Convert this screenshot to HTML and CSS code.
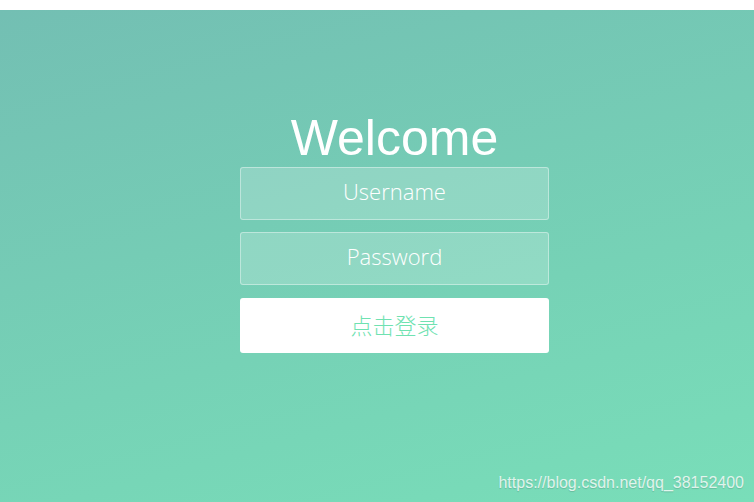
FILE: index.html
```html
<!DOCTYPE html>
<html lang="zh">
<head>
<meta charset="utf-8">
<title>Welcome</title>
<link rel="stylesheet" href="styles.css">
</head>
<body>
<div class="wrapper">
  <div class="container">
    <h1 class="title">Welcome</h1>
    <form class="form">
      <input class="field" type="text" placeholder="Username">
      <input class="field" type="password" placeholder="Password">
      <button class="login" type="button">点击登录</button>
    </form>
  </div>
  <div class="watermark">https://blog.csdn.net/qq_38152400</div>
</div>
</body>
</html>
```
FILE: styles.css
```css
html, body {
  margin: 0;
  padding: 0;
  background: #ffffff;
}
body {
  padding-top: 10px;
  overflow: hidden;
}
.wrapper {
  position: relative;
  height: 492px;
  background: linear-gradient(165deg, #73bfb3 0%, #76d2b6 60%, #79deb9 100%);
  overflow: hidden;
}
.container {
  display: flex;
  flex-direction: column;
  align-items: center;
  padding-top: 103px;
  padding-left: 35px;
}
.title {
  margin: 0 0 4px 0;
  font-family: "Liberation Sans", Arial, sans-serif;
  font-weight: normal;
  font-size: 50px;
  line-height: 50px;
  color: #ffffff;
}
.form {
  display: flex;
  flex-direction: column;
  gap: 12px;
  width: 309px;
}
.field {
  box-sizing: border-box;
  width: 309px;
  height: 53px;
  margin: 0;
  padding: 0 0 5px 0;
  border: 1px solid rgba(255, 255, 255, 0.4);
  border-radius: 3px;
  background: rgba(255, 255, 255, 0.2);
  font-family: "Open Sans", "Noto Sans", sans-serif;
  font-weight: 300;
  font-size: 22px;
  color: #ffffff;
  text-align: center;
  outline: none;
}
.field::placeholder {
  color: #ffffff;
  opacity: 1;
}
.login {
  box-sizing: border-box;
  width: 309px;
  height: 55px;
  margin-top: 1px;
  padding: 0 0 4px 0;
  border: 0;
  border-radius: 3px;
  background: #ffffff;
  color: #6fe2b1;
  font-family: "Noto Sans CJK SC", "Noto Sans", sans-serif;
  font-weight: 300;
  font-size: 22px;
  cursor: pointer;
}
.watermark {
  position: absolute;
  right: 10px;
  bottom: 10px;
  font-family: "Liberation Sans", Arial, sans-serif;
  font-size: 16px;
  line-height: 18px;
  color: rgba(255, 255, 255, 0.8);
  text-shadow: 0 1px 1px rgba(0, 0, 0, 0.15);
}
```
